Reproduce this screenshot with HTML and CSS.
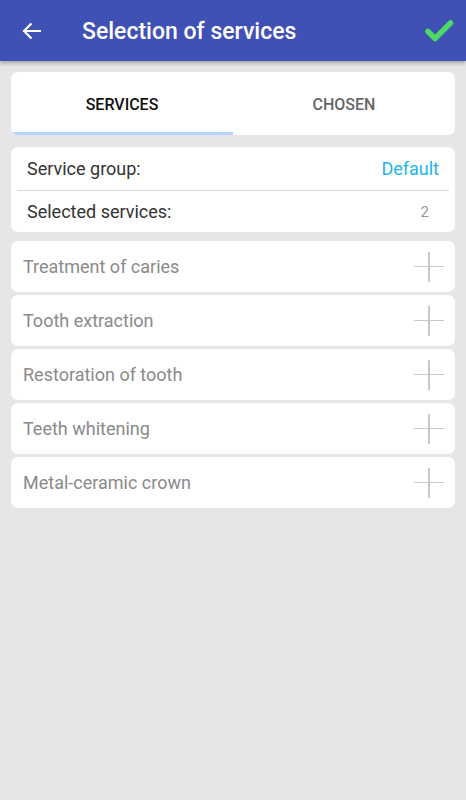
FILE: index.html
```html
<!DOCTYPE html>
<html lang="en">
  <head>
    <meta charset="UTF-8" />
    <title>Selection of services</title>
    <link rel="stylesheet" href="styles.css">
  </head>
  <body>
    <div class="toolbar">
      <a class="toolbar-back" href="#">
        <svg width="20" height="18" viewBox="0 0 20 18">
          <path d="M19 9H2M9.5 1.5L2 9l7.5 7.5" fill="none" stroke="#fff" stroke-width="2.2" />
        </svg>
      </a>
      <h1 class="toolbar-title">Selection of services</h1>
      <a class="toolbar-ok" href="#">
        <svg width="30" height="24" viewBox="0 0 30 24">
          <path d="M4 12.5l7 7L26.5 4" fill="none" stroke="#4cd964" stroke-width="5.5" stroke-linecap="round" stroke-linejoin="round" />
        </svg>
      </a>
    </div>

    <div class="conteudo">
      <div class="card tabs">
        <a class="tab ativa" href="#">Services</a>
        <a class="tab" href="#">Chosen</a>
      </div>

      <div class="card info">
        <div class="info-linha">
          <span>Service group:</span>
          <span class="info-grupo">Default</span>
        </div>
        <div class="info-linha">
          <span>Selected services:</span>
          <span class="info-qtd">2</span>
        </div>
      </div>

      <div class="card servico">
        <span>Treatment of caries</span>
        <span class="mais"></span>
      </div>
      <div class="card servico">
        <span>Tooth extraction</span>
        <span class="mais"></span>
      </div>
      <div class="card servico">
        <span>Restoration of tooth</span>
        <span class="mais"></span>
      </div>
      <div class="card servico">
        <span>Teeth whitening</span>
        <span class="mais"></span>
      </div>
      <div class="card servico">
        <span>Metal-ceramic crown</span>
        <span class="mais"></span>
      </div>
    </div>
  </body>
</html>
```
FILE: styles.css
```css
* {
  box-sizing: border-box;
  margin: 0;
  padding: 0;
  font-family: Roboto, "Noto Sans", sans-serif;
}

body {
  background-color: #e6e6e6;
  min-height: 800px;
}

a {
  text-decoration: none;
  color: inherit;
}

.toolbar {
  display: flex;
  align-items: center;
  height: 61px;
  background-color: #3f51b5;
  color: #fff;
  box-shadow: 0 2px 4px rgba(0, 0, 0, .3);
}

.toolbar-back {
  display: flex;
  width: 82px;
  padding-left: 22px;
}

.toolbar-title {
  flex: 1;
  font-size: 23px;
  font-weight: 500;
  padding-top: 2px;
}

.toolbar-ok {
  display: flex;
  padding-right: 12px;
}

.conteudo {
  display: flex;
  flex-direction: column;
  gap: 3px;
  padding: 11px 11px;
}

.card {
  background-color: #fff;
  border-radius: 7px;
  overflow: hidden;
}

.tabs {
  display: flex;
  height: 63px;
  margin-bottom: 9px;
}

.tab {
  flex: 1;
  display: flex;
  align-items: center;
  justify-content: center;
  text-transform: uppercase;
  font-size: 16px;
  font-weight: 500;
  color: #666;
  padding-top: 5px;
  border-bottom: 3px solid transparent;
}

.tab.ativa {
  color: #111;
  border-bottom-color: #b3d4fc;
}

.info {
  padding: 0 6px;
  margin-bottom: 6px;
}

.info-linha {
  display: flex;
  justify-content: space-between;
  align-items: center;
  height: 43px;
  padding: 0 10px;
  font-size: 18px;
  color: #333;
}

.info-linha + .info-linha {
  border-top: 1px solid #d8d8d8;
  height: 42px;
}

.info-grupo {
  color: #1fb4ea;
}

.info-qtd {
  color: #999;
  font-size: 15px;
  padding-right: 10px;
}

.servico {
  display: flex;
  justify-content: space-between;
  align-items: center;
  height: 51px;
  padding: 0 11px 0 12px;
  font-size: 18px;
  color: #8a8a8a;
}

.mais {
  position: relative;
  width: 30px;
  height: 30px;
}

.mais::before, .mais::after {
  content: "";
  position: absolute;
  background-color: #c8c8c8;
}

.mais::before {
  left: 0;
  right: 0;
  top: 14px;
  height: 1.5px;
}

.mais::after {
  top: 0;
  bottom: 0;
  left: 14px;
  width: 1.5px;
}
```
